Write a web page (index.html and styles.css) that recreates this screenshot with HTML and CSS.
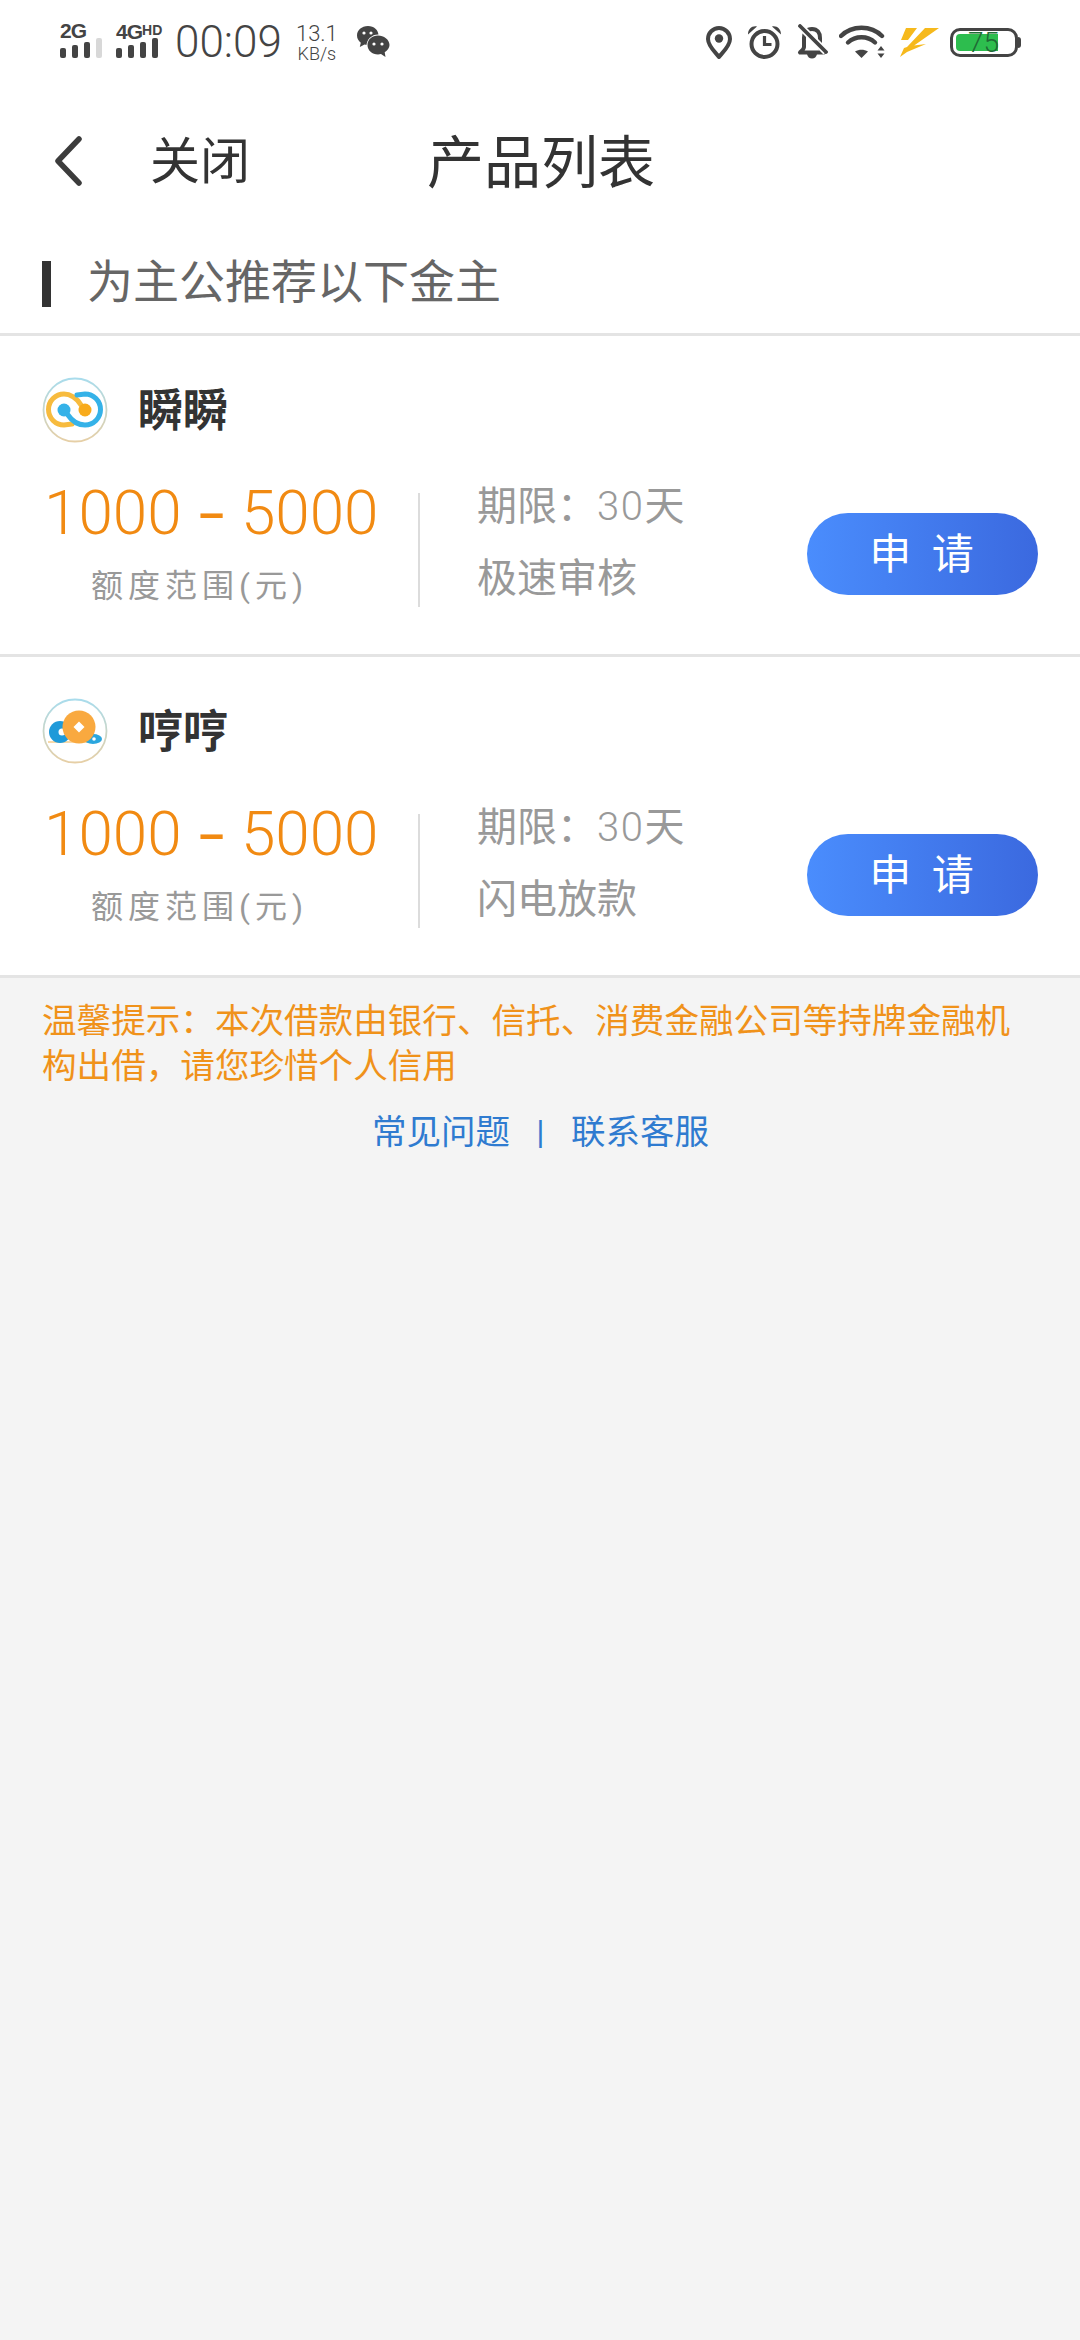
FILE: index.html
```html
<!DOCTYPE html>
<html lang="zh-CN">

<head>
    <meta charset="UTF-8">
    <meta name="viewport" content="width=device-width, initial-scale=1.0">
    <title>产品列表</title>
    <link rel="stylesheet" href="styles.css">
</head>

<body>
    <div class="status-bar">
        <div class="signal signal-first">
            <div class="signal-label">2G</div>
            <div class="signal-bars">
                <span class="bar"></span><span class="bar"></span><span class="bar"></span><span class="bar bar-off"></span>
            </div>
        </div>
        <div class="signal signal-second">
            <div class="signal-label">4G<small>HD</small></div>
            <div class="signal-bars">
                <span class="bar"></span><span class="bar"></span><span class="bar"></span><span class="bar"></span>
            </div>
        </div>
        <div class="clock">00:09</div>
        <div class="speed">
            <span class="speed-value">13.1</span>
            <span class="speed-unit">KB/s</span>
        </div>
        <svg class="icon-wechat" width="34" height="34" viewBox="0 0 34 34">
            <path d="M12 1C5.500 1 1 5.300 1 10.500c0 3 1.500 5.500 3.800 7.200L3.800 22l4.700-2.500c1 .3 2 .4 3 .4 6 0 11-4 11-9.400S18 1 12 1z" fill="#444" />
            <circle cx="22" cy="21" r="11.500" fill="#fff" />
            <path d="M22 10.500c-5.700 0-10.500 4-10.500 9.500s4.800 9.500 10.500 9.500c1 0 2-.1 3-.4l4.500 2.900-.8-4.700c2.800-1.800 4.800-4.400 4.800-7.300 0-5.500-5.800-9.500-11.500-9.500z" fill="#444" />
            <circle cx="8" cy="8" r="1.600" fill="#fff" />
            <circle cx="15" cy="8" r="1.600" fill="#fff" />
            <circle cx="18" cy="19" r="1.600" fill="#fff" />
            <circle cx="26" cy="19" r="1.600" fill="#fff" />
        </svg>

        <div class="status-right">
            <svg width="26" height="33" viewBox="0 0 26 33">
                <path d="M13 2a11 11 0 0 0-11 11c0 7 7 13 11 18 4-5 11-11 11-18A11 11 0 0 0 13 2z" fill="none" stroke="#444" stroke-width="4" stroke-linejoin="round" />
                <circle cx="13" cy="12.500" r="4.200" fill="#444" />
            </svg>
            <svg width="35" height="34" viewBox="0 0 35 34">
                <circle cx="17.500" cy="19" r="13" fill="none" stroke="#444" stroke-width="4" />
                <path d="M17.500 11v8.500h7" fill="none" stroke="#444" stroke-width="3.200" />
                <path d="M1 9.500C1 4 5 .5 10 1.500zM34 9.500C34 4 30 .5 25 1.500z" fill="#444" />
            </svg>
            <svg width="31" height="36" viewBox="0 0 31 36">
                <path d="M15 5c-5.500 0-8 4-8 9v9c0 2-2 3.500-4 5.500h24c-2-2-4-3.500-4-5.500v-9c0-5-2.500-9-8-9z" fill="none" stroke="#444" stroke-width="4" stroke-linejoin="round" />
                <path d="M10 30c.6 3 2.500 4.500 5 4.500s4.400-1.500 5-4.500z" fill="#444" />
                <path d="M3 2l26 26" stroke="#fff" stroke-width="7" />
                <path d="M3 2l26 26" stroke="#444" stroke-width="3.800" stroke-linecap="round" />
            </svg>
            <svg class="icon-wifi" width="47" height="34" viewBox="0 0 47 34">
                <path d="M2 11c11-11 30-11 41 0" fill="none" stroke="#444" stroke-width="4.400" stroke-linecap="round" />
                <path d="M9 17.500c7.500-7 19.500-7 27 0" fill="none" stroke="#444" stroke-width="4.400" stroke-linecap="round" />
                <path d="M16 26.500c4-2.500 9-2.500 13 0l-6.500 6.500z" fill="#444" />
                <path d="M42 21l3.500 4.500h-7zM42 33l3.500-4.500h-7z" fill="#444" />
            </svg>
            <svg width="42" height="31" viewBox="0 0 42 31">
                <path d="M8 1h11L10 13H3zM27 1h14L14 20H9zM28 17 9 25 2 30l4-9 6-2z" fill="#f6b91c" />
            </svg>
            <div class="battery">
                <div class="battery-body">
                    <div class="battery-fill"></div>
                    <span class="battery-num">75</span>
                </div>
                <div class="battery-nub"></div>
            </div>
        </div>
    </div>

    <div class="nav-bar">
        <svg class="nav-back" width="28" height="50" viewBox="0 0 28 50">
            <path d="M25 3 4 25l21 22" fill="none" stroke="#3c3c3c" stroke-width="5.500" stroke-linecap="round" stroke-linejoin="round" />
        </svg>
        <a class="nav-close">关闭</a>
        <h1 class="nav-title">产品列表</h1>
    </div>

    <div class="section-head">
        <span class="section-mark"></span>
        <span class="section-text">为主公推荐以下金主</span>
    </div>

    <section class="product">
        <div class="product-head">
            <svg class="product-logo" width="66" height="66" viewBox="0 0 66 66">
                <defs>
                    <linearGradient id="ring" x1="0" y1="0" x2="0" y2="1">
                        <stop offset="0" stop-color="#a9dcec" />
                        <stop offset="1" stop-color="#e6cfa6" />
                    </linearGradient>
                </defs>
                <circle cx="33" cy="33" r="31.500" fill="#fff" stroke="url(#ring)" stroke-width="1.800" />
                <path d="M39 28C35 21 28 17 22 17a15.500 15.500 0 0 0 0 31l8-1" fill="none" stroke="#f7bb3e" stroke-width="5" stroke-linecap="round" />
                <path d="M26 38c4 6 10 10 17 10a15.500 15.500 0 0 0 0-31l-8 1" fill="none" stroke="#35b2e8" stroke-width="5" stroke-linecap="round" />
                <circle cx="22" cy="33" r="6.500" fill="#35b2e8" />
                <circle cx="43" cy="33" r="6.500" fill="#f8ab1c" />
            </svg>
            <span class="product-name">瞬瞬</span>
        </div>
        <div class="product-body">
            <div class="amount">
                <div class="amount-range">1000 <span class="dash">-</span> 5000</div>
                <div class="amount-label">额度范围(元)</div>
            </div>
            <div class="product-info">
                <div>期限：<span class="num">30</span>天</div>
                <div>极速审核</div>
            </div>
            <button class="apply-btn" type="button">申 请</button>
        </div>
    </section>

    <section class="product">
        <div class="product-head">
            <svg class="product-logo" width="66" height="66" viewBox="0 0 66 66">
                <circle cx="33" cy="33" r="31.500" fill="#fff" stroke="url(#ring)" stroke-width="1.800" />
                <path d="M6 44h40" stroke="#f9d9a8" stroke-width="2" />
                <circle cx="18" cy="34" r="11" fill="#1f9ad9" />
                <circle cx="20" cy="34" r="3.500" fill="#fff" />
                <ellipse cx="51" cy="41" rx="9" ry="5" fill="#2aa6de" />
                <circle cx="52" cy="41" r="1.800" fill="#fff" />
                <circle cx="37" cy="29" r="16.500" fill="#f9a93f" />
                <path d="M37 23.500l5.500 5.500-5.500 5.500-5.500-5.500z" fill="#fff" />
            </svg>
            <span class="product-name">哼哼</span>
        </div>
        <div class="product-body">
            <div class="amount">
                <div class="amount-range">1000 <span class="dash">-</span> 5000</div>
                <div class="amount-label">额度范围(元)</div>
            </div>
            <div class="product-info">
                <div>期限：<span class="num">30</span>天</div>
                <div>闪电放款</div>
            </div>
            <button class="apply-btn" type="button">申 请</button>
        </div>
    </section>

    <p class="tip">温馨提示：本次借款由银行、信托、消费金融公司等持牌金融机构出借，请您珍惜个人信用</p>

    <div class="help-links">
        <a>常见问题</a>
        <span class="help-sep">|</span>
        <a>联系客服</a>
    </div>
</body>

</html>
```

FILE: styles.css
```css
:root {
    --orange: #f18a12;
    --grey-text: #999999;
    --line: #e4e4e4;
    --cjk: "Roboto", "Noto Sans CJK SC", sans-serif;
}

body {
    margin: 0;
    min-height: 2340px;
    background-color: #f4f4f4;
    font-family: var(--cjk);
    color: #333;
}

/* status bar */
.status-bar {
    height: 84px;
    background-color: #fff;
    display: flex;
    align-items: center;
    padding-left: 60px;
    color: #444;
    box-sizing: border-box;
}

.signal {
    width: 44px;
    display: flex;
    flex-direction: column;
    margin-top: -4px;
}

.signal-second {
    margin-left: 12px;
}

.signal-label {
    font-family: "Liberation Sans", sans-serif;
    font-weight: bold;
    font-size: 21px;
    line-height: 15px;
    letter-spacing: -1px;
    height: 15px;
    white-space: nowrap;
}

.signal-label small {
    font-size: 14px;
    vertical-align: 4px;
    letter-spacing: 0;
}

.signal-bars {
    display: flex;
    align-items: flex-end;
    gap: 6px;
    height: 20px;
}

.bar {
    width: 6px;
    border-radius: 2px;
    background-color: #444;
}

.bar:nth-child(1) { height: 10px; }
.bar:nth-child(2) { height: 13px; }
.bar:nth-child(3) { height: 16px; }
.bar:nth-child(4) { height: 20px; }

.bar-off {
    background-color: #d8d8d8;
}

.clock {
    margin-left: 15px;
    font-size: 44px;
    font-weight: 300;
    line-height: 50px;
}

.speed {
    margin-left: 14px;
    width: 42px;
    display: flex;
    flex-direction: column;
    align-items: center;
    font-weight: 300;
}

.speed-value {
    font-size: 22px;
    line-height: 23px;
}

.speed-unit {
    font-size: 18px;
    line-height: 17px;
}

.icon-wechat {
    margin-left: 18px;
}

.status-right {
    margin-left: auto;
    margin-right: 59px;
    display: flex;
    align-items: center;
    gap: 15px;
}

.icon-wifi {
    margin: 0 -3px 0 -4px;
}

.battery {
    display: flex;
    align-items: center;
    margin-left: -5px;
}

.battery-body {
    width: 68px;
    height: 29px;
    border: 3px solid #444;
    border-radius: 10px;
    box-sizing: border-box;
    padding: 3px;
    position: relative;
}

.battery-fill {
    width: 42px;
    height: 100%;
    background-color: #2dbd4e;
    border-radius: 4px 0 0 4px;
}

.battery-num {
    position: absolute;
    left: 15px;
    top: -2px;
    font-size: 28px;
    line-height: 27px;
    font-weight: 300;
    color: #1f6a35;
}

.battery-nub {
    width: 3px;
    height: 11px;
    background-color: #444;
    border-radius: 0 3px 3px 0;
}

/* nav */
.nav-bar {
    height: 154px;
    background-color: #fff;
    display: flex;
    align-items: center;
    padding-left: 54px;
}

.nav-close {
    margin-left: 68px;
    margin-top: -8px;
    font-size: 50px;
    color: #333;
}

.nav-title {
    margin: -6px 0 0 177px;
    font-size: 57px;
    font-weight: normal;
    color: #333;
}

.section-head {
    height: 95px;
    background-color: #fff;
    display: flex;
    align-items: center;
    padding-left: 42px;
    border-bottom: 3px solid var(--line);
}

.section-mark {
    width: 9px;
    height: 46px;
    margin-top: -3px;
    background-color: #333;
}

.section-text {
    margin-left: 36px;
    margin-top: -15px;
    font-size: 46px;
    color: #666;
}

/* product cards */
.product {
    height: 276px;
    background-color: #fff;
    border-bottom: 3px solid var(--line);
    padding: 42px 42px 0;
}

.product-head {
    display: flex;
    align-items: center;
    height: 64px;
}

.product-name {
    margin-left: 30px;
    margin-top: -5px;
    font-size: 45px;
    font-weight: bold;
    color: #333;
}

.product-body {
    display: flex;
    align-items: center;
    margin-top: 33px;
    height: 150px;
}

.amount {
    width: 376px;
    height: 114px;
    border-right: 2px solid #dcdcdc;
}

.amount-range {
    margin-top: -15px;
    padding-left: 2px;
    font-size: 62px;
    font-weight: 300;
    line-height: 70px;
    word-spacing: 6px;
    color: var(--orange);
    white-space: nowrap;
}

.dash {
    display: inline-block;
    font-weight: 400;
    transform: scaleX(1.5);
}

.amount-label {
    margin-top: 18px;
    padding-left: 49px;
    font-size: 32px;
    line-height: 40px;
    letter-spacing: 5px;
    color: var(--grey-text);
    white-space: nowrap;
}

.product-info {
    margin-left: 57px;
    margin-top: -14px;
    font-size: 40px;
    line-height: 72px;
    color: var(--grey-text);
    white-space: nowrap;
}

.num {
    font-weight: 300;
    letter-spacing: 1.500px;
}

.apply-btn {
    margin-left: auto;
    margin-top: 8px;
    width: 231px;
    height: 82px;
    border: none;
    border-radius: 41px;
    background: linear-gradient(90deg, #4a8dfd, #3b69df);
    color: #fff;
    font-family: var(--cjk);
    font-size: 42px;
    word-spacing: 6px;
    letter-spacing: 2px;
    padding: 0 0 7px;
}

/* footer */
.tip {
    margin: 21px 0 0;
    padding: 0 42px;
    font-size: 34.600px;
    line-height: 45px;
    color: #f0921a;
}

.help-links {
    margin-top: 21px;
    margin-left: 372px;
    display: flex;
    align-items: center;
    font-size: 34.500px;
    line-height: 45px;
    color: #2f7bd0;
}

.help-sep {
    width: 61px;
    text-align: center;
    font-size: 34px;
}
```
